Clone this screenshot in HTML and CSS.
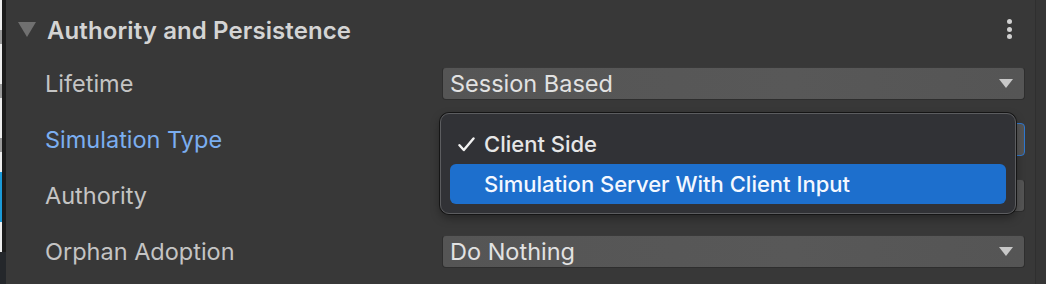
FILE: index.html
```html
<!DOCTYPE html>
<html>
<head>
<meta charset="utf-8">
<link rel="stylesheet" href="styles.css">
</head>
<body>
<div class="app">
  <div class="edge-left">
    <div class="edge-white"><span class="tick"></span><span class="tick"></span><span class="tick"></span></div>
    <div class="edge-blue"></div>
    <div class="edge-white short"></div>
    <div class="edge-dark"></div>
  </div>
  <div class="panel">
    <div class="header">
      <span class="foldout"></span>
      <span class="title">Authority and Persistence</span>
      <span class="kebab"><i></i><i></i><i></i></span>
    </div>
    <div class="rows">
      <div class="row">
        <span class="label">Lifetime</span>
        <div class="dropdown"><span class="value">Session Based</span><span class="arrow"></span></div>
      </div>
      <div class="row">
        <span class="label active">Simulation Type</span>
        <div class="dropdown focused"><span class="value"></span><span class="arrow"></span></div>
      </div>
      <div class="row">
        <span class="label">Authority</span>
        <div class="dropdown"><span class="value"></span><span class="arrow"></span></div>
      </div>
      <div class="row">
        <span class="label">Orphan Adoption</span>
        <div class="dropdown"><span class="value">Do Nothing</span><span class="arrow"></span></div>
      </div>
    </div>
  </div>
  <div class="edge-right"></div>
  <div class="menu">
    <div class="item">
      <span class="check"><svg width="17" height="15" viewBox="0 0 17 15"><path d="M1.5 8.2 L5.8 13 L15.5 1.5" fill="none" stroke="#f2f2f2" stroke-width="2.4" stroke-linecap="round" stroke-linejoin="round"/></svg></span>
      <span class="text">Client Side</span>
    </div>
    <div class="item selected"><span class="check"></span><span class="text">Simulation Server With Client Input</span></div>
  </div>
</div>
</body>
</html>
```
FILE: styles.css
```css
* { box-sizing: border-box; }
html, body { margin: 0; padding: 0; }
body {
  width: 1046px;
  height: 284px;
  overflow: hidden;
  background: #383838;
  font-family: Inter, "Open Sans", sans-serif;
}
.app {
  position: relative;
  display: flex;
  width: 1046px;
  height: 284px;
}
.edge-left {
  width: 6px;
  display: flex;
  flex-direction: column;
  background: #1b1b1b;
}
.edge-white {
  height: 172px;
  width: 2px;
  background: #ececec;
  display: flex;
  flex-direction: column;
  gap: 40px;
  padding-top: 30px;
}
.edge-white.short { height: 28px; }
.tick { display: block; width: 2px; height: 14px; background: #9a9a9a; }
.edge-blue { height: 50px; width: 2px; background: #1b9ad8; }
.edge-dark { flex: 1; width: 6px; background: #24272b; }
.panel {
  flex: 1;
  display: flex;
  flex-direction: column;
  background: #383838;
}
.header {
  height: 55px;
  display: flex;
  align-items: center;
  padding-left: 12px;
  padding-right: 23px;
  padding-top: 5px;
}
.foldout {
  width: 0;
  height: 0;
  border-left: 9px solid transparent;
  border-right: 9px solid transparent;
  border-top: 15px solid #707070;
  margin-top: -1px;
}
.title {
  margin-left: 11px;
  font-size: 24px;
  font-weight: 600;
  color: #d4d4d4;
  flex: 1;
  letter-spacing: 0.1px;
}
.kebab {
  display: flex;
  flex-direction: column;
  gap: 2.5px;
  margin-top: -2px;
}
.kebab i {
  display: block;
  width: 5px;
  height: 5px;
  border-radius: 50%;
  background: #d0d0d0;
}
.rows { display: flex; flex-direction: column; }
.row {
  height: 56px;
  display: grid;
  grid-template-columns: 397px 583px;
  align-items: center;
  padding-left: 39px;
}
.label {
  font-size: 23.5px;
  color: #c4c4c4;
}
.label.active { color: #7baef0; }
.dropdown {
  height: 33px;
  background: linear-gradient(90deg, #555555, #585858 60%, #555555);
  border: 1px solid #2e2e2e;
  border-top-color: #3a3a3a;
  border-radius: 4px;
  display: flex;
  align-items: center;
  padding-left: 7px;
  padding-right: 11px;
}
.dropdown.focused { border-color: #2f78d0; }
.value {
  flex: 1;
  font-size: 23.5px;
  color: #e2e2e2;
}
.arrow {
  width: 0;
  height: 0;
  border-left: 7px solid transparent;
  border-right: 7px solid transparent;
  border-top: 9px solid #c8c8c8;
}
.edge-right {
  width: 11px;
  background: #363636;
  border-left: 1px solid #2f2f2f;
}
.menu {
  position: absolute;
  left: 440px;
  top: 113px;
  width: 576px;
  height: 101px;
  background: #313236;
  border: 1px solid #5c5d60;
  border-radius: 9px;
  box-shadow: 0 0 0 1px #151515, 0 4px 10px rgba(0,0,0,0.35);
  padding: 10px 9px 9px 9px;
  display: flex;
  flex-direction: column;
}
.item {
  height: 40px;
  display: flex;
  align-items: center;
  font-size: 22px;
  font-weight: 500;
  color: #e6e6e6;
  border-radius: 6px;
}
.check {
  flex: 0 0 34px;
  width: 34px;
  padding-left: 8px;
  display: flex;
  align-items: center;
}
.check svg { display: block; }
.item.selected {
  background: #1d6fcd;
  color: #f4f8ff;
}
```
